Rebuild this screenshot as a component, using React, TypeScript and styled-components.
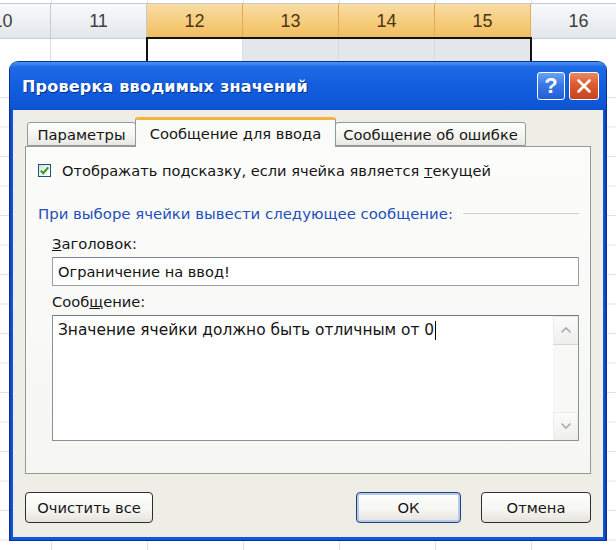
import React from "react";
import styled, { createGlobalStyle } from "styled-components";

const GlobalStyle = createGlobalStyle`
  html, body {
    margin: 0;
    padding: 0;
    background: #fff;
  }
  body {
    width: 616px;
    height: 550px;
    overflow: hidden;
    font-family: "DejaVu Sans", "Liberation Sans", sans-serif;
  }
`;

const columns = [
  { n: 10, sel: false, active: false },
  { n: 11, sel: false, active: false },
  { n: 12, sel: true, active: true },
  { n: 13, sel: true, active: false },
  { n: 14, sel: true, active: false },
  { n: 15, sel: true, active: false },
  { n: 16, sel: false, active: false },
];

export default function App() {
  return (
    <>
      <GlobalStyle />
      <Sheet>
        <HeaderRow>
          {columns.map((c) => (
            <ColHeader key={c.n} $sel={c.sel}>
              {c.n}
            </ColHeader>
          ))}
        </HeaderRow>
        <CellRow>
          {columns.map((c) => (
            <Cell key={c.n} $sel={c.sel && !c.active} />
          ))}
        </CellRow>
        <Selection />

        <Dialog>
          <TitleBar>
            <Title>Проверка вводимых значений</Title>
            <TitleButtons>
              <HelpButton>?</HelpButton>
              <CloseButton>
                <svg width="18" height="18" viewBox="0 0 18 18">
                  <path
                    d="M3.5 3.5 L14.5 14.5 M14.5 3.5 L3.5 14.5"
                    stroke="#fff"
                    strokeWidth="2.6"
                    strokeLinecap="round"
                  />
                </svg>
              </CloseButton>
            </TitleButtons>
          </TitleBar>

          <Client>
            <TabStrip>
              <Tab $w={109}>Параметры</Tab>
              <Tab $w={201} $active>
                Сообщение для ввода
              </Tab>
              <Tab $w={191}>Сообщение об ошибке</Tab>
            </TabStrip>

            <Panel>
              <CheckRow>
                <CheckBox>
                  <svg width="11" height="11" viewBox="0 0 11 11">
                    <path
                      d="M1.8 5.6 L4.3 8.2 L9.3 2.4"
                      fill="none"
                      stroke="#21a121"
                      strokeWidth="2"
                    />
                  </svg>
                </CheckBox>
                <Text>
                  Отображать подсказку, если ячейка является <U>т</U>екущей
                </Text>
              </CheckRow>

              <Section>
                <SectionTitle>При выборе ячейки вывести следующее сообщение:</SectionTitle>
                <SectionLine />
              </Section>

              <Fields>
                <Label>
                  <U>З</U>аголовок:
                </Label>
                <Input>Ограничение на ввод!</Input>
                <Label $gap>
                  Сооб<U>щ</U>ение:
                </Label>
                <TextArea>
                  <TextBody>
                    Значение ячейки должно быть отличным от 0<Caret />
                  </TextBody>
                  <ScrollBar>
                    <ScrollBtn>
                      <svg width="12" height="8" viewBox="0 0 12 8">
                        <path d="M1.5 6.5 L6 2 L10.5 6.5" fill="none" stroke="#a9abb0" strokeWidth="1.6" />
                      </svg>
                    </ScrollBtn>
                    <ScrollTrack />
                    <ScrollBtn>
                      <svg width="12" height="8" viewBox="0 0 12 8">
                        <path d="M1.5 1.5 L6 6 L10.5 1.5" fill="none" stroke="#a9abb0" strokeWidth="1.6" />
                      </svg>
                    </ScrollBtn>
                  </ScrollBar>
                </TextArea>
              </Fields>
            </Panel>

            <ButtonRow>
              <Button $w={128}>Очистить все</Button>
              <Spacer />
              <Button $w={105} $default>
                ОК
              </Button>
              <Button $w={110}>Отмена</Button>
            </ButtonRow>
          </Client>
        </Dialog>
      </Sheet>
    </>
  );
}

const Sheet = styled.div`
  position: relative;
  width: 616px;
  height: 550px;
  overflow: hidden;
  background-color: #fff;
  background-image: linear-gradient(to right, #e0e2e5 0 1px, transparent 1px),
    linear-gradient(to bottom, #e0e2e5 0 1px, transparent 1px);
  background-size: 96px 100%, 100% 29.5px;
  background-position: 51px 0, 0 38px;
`;

const HeaderRow = styled.div`
  display: flex;
  margin: 3px 0 0 -45px;
  height: 34px;
  border-top: 1px solid #c6cbd3;
  border-bottom: 1px solid #c6cbd3;
`;

const ColHeader = styled.div<{ $sel: boolean }>`
  flex: 0 0 96px;
  box-sizing: border-box;
  display: flex;
  align-items: center;
  justify-content: center;
  border-right: 1px solid ${(p) => (p.$sel ? "#e2ac55" : "#c6cbd3")};
  background: ${(p) =>
    p.$sel
      ? "linear-gradient(to bottom, #f9dca5 0%, #f6cd80 50%, #f0bd5e 100%)"
      : "linear-gradient(to bottom, #f8f9fb 0%, #eef0f3 50%, #e2e5ea 100%)"};
  color: ${(p) => (p.$sel ? "#4a3512" : "#3c3f44")};
  font-family: "Liberation Sans", Arial, sans-serif;
  font-size: 18px;
`;

const CellRow = styled.div`
  display: flex;
  margin-left: -45px;
  height: 30px;
`;

const Cell = styled.div<{ $sel: boolean }>`
  flex: 0 0 96px;
  box-sizing: border-box;
  border-right: 1px solid #dadcdf;
  background: ${(p) => (p.$sel ? "#e3e6eb" : "#fff")};
`;

const Selection = styled.div`
  position: absolute;
  left: 146px;
  top: 37px;
  width: 386px;
  height: 40px;
  box-sizing: border-box;
  border: 2px solid #111;
  border-bottom: none;
`;

const Dialog = styled.div`
  position: absolute;
  left: 10px;
  top: 62px;
  width: 596px;
  height: 478px;
  display: flex;
  flex-direction: column;
  border-radius: 8px 8px 0 0;
  background: linear-gradient(to right, #0a3fb8 0, #1258dc 2px, #1258dc calc(100% - 2px), #0a34a8 100%);
  box-shadow: 0 0 0 1px #0b2f96;
  overflow: hidden;
`;

const TitleBar = styled.div`
  height: 48px;
  flex: 0 0 48px;
  display: flex;
  align-items: center;
  padding: 0 7px 0 12px;
  background: linear-gradient(
    to bottom,
    #4b95f5 0%,
    #1f6be6 10%,
    #135fdf 45%,
    #0e58d8 85%,
    #0c50cb 100%
  );
`;

const Title = styled.div`
  flex: 1;
  color: #fff;
  font-size: 16px;
  font-weight: bold;
  letter-spacing: 0.2px;
  text-shadow: 1px 1px 0 #0a2f86;
`;

const TitleButtons = styled.div`
  display: flex;
  gap: 4px;
`;

const TitleBtn = styled.div`
  width: 28px;
  height: 28px;
  box-sizing: border-box;
  border: 1px solid #fff;
  border-radius: 3px;
  display: flex;
  align-items: center;
  justify-content: center;
`;

const HelpButton = styled(TitleBtn)`
  background: linear-gradient(to bottom, #6aa2f6 0%, #3a78e8 45%, #215fd6 100%);
  color: #fff;
  font-family: "Liberation Sans", Arial, sans-serif;
  font-weight: bold;
  font-size: 22px;
`;

const CloseButton = styled(TitleBtn)`
  width: 30px;
  background: linear-gradient(to bottom, #ec8a62 0%, #dc5a30 45%, #c8441c 100%);
`;

const Client = styled.div`
  flex: 1;
  margin: 0 3px 3px 3px;
  padding: 7px 12px 14px 12px;
  background: #eeede6;
  display: flex;
  flex-direction: column;
  color: #151515;
  font-size: 14.7px;
`;

const TabStrip = styled.div`
  display: flex;
  align-items: flex-end;
  height: 29px;
  padding-left: 2px;
  position: relative;
  z-index: 1;
  font-size: 14.7px;
`;

const Tab = styled.div<{ $w: number; $active?: boolean }>`
  width: ${(p) => p.$w}px;
  box-sizing: border-box;
  height: ${(p) => (p.$active ? "30px" : "24px")};
  margin-bottom: ${(p) => (p.$active ? "-1px" : "0")};
  margin-left: ${(p) => (p.$active ? "-1px" : "0")};
  margin-right: ${(p) => (p.$active ? "-1px" : "0")};
  display: flex;
  align-items: center;
  justify-content: center;
  padding-top: ${(p) => (p.$active ? "0" : "1px")};
  border: 1px solid #919b9c;
  border-bottom: ${(p) => (p.$active ? "none" : "1px solid #919b9c")};
  border-top: ${(p) => (p.$active ? "3px solid #f5b43e" : "1px solid #919b9c")};
  border-radius: 3px 3px 0 0;
  background: ${(p) =>
    p.$active ? "#fbfbf9" : "linear-gradient(to bottom, #fefefe 0%, #f4f4f0 60%, #e8e7e1 100%)"};
  position: relative;
  z-index: ${(p) => (p.$active ? 2 : 1)};
  white-space: nowrap;
`;

const Panel = styled.div`
  height: 328px;
  box-sizing: border-box;
  border: 1px solid #919b9c;
  background: linear-gradient(to bottom, #fcfcfb 0%, #f6f6f2 100%);
  padding: 16px 11px 0 12px;
  display: flex;
  flex-direction: column;
`;

const CheckRow = styled.div`
  display: flex;
  align-items: center;
  gap: 11px;
  height: 14px;
`;

const CheckBox = styled.div`
  width: 13px;
  height: 13px;
  box-sizing: border-box;
  border: 1px solid #1c5180;
  background: linear-gradient(135deg, #dcdcd6 0%, #fbfbf9 70%);
  display: flex;
  align-items: center;
  justify-content: center;
`;

const Text = styled.span`
  white-space: nowrap;
  font-size: 14.6px;
`;

const U = styled.span`
  text-decoration: underline;
`;

const Section = styled.div`
  display: flex;
  align-items: center;
  gap: 10px;
  margin-top: 28px;
  height: 17px;
`;

const SectionTitle = styled.span`
  color: #1f4fbc;
  white-space: nowrap;
  font-size: 14.9px;
`;

const SectionLine = styled.div`
  flex: 1;
  height: 1px;
  background: #d2d0c4;
`;

const Fields = styled.div`
  display: flex;
  flex-direction: column;
  margin: 13px 0 0 14px;
`;

const Label = styled.div<{ $gap?: boolean }>`
  height: 17px;
  margin: ${(p) => (p.$gap ? "7px" : "0")} 0 5px 0;
  white-space: nowrap;
`;

const Input = styled.div`
  height: 29px;
  box-sizing: border-box;
  border: 1px solid #9a9ea4;
  border-top-color: #7f848b;
  background: #fff;
  display: flex;
  align-items: center;
  padding-left: 5px;
  font-size: 14.6px;
`;

const TextArea = styled.div`
  height: 126px;
  box-sizing: border-box;
  border: 1px solid #8c9097;
  border-top-color: #767b82;
  background: #fff;
  display: flex;
`;

const TextBody = styled.div`
  flex: 1;
  padding: 5px 5px;
  display: flex;
  align-items: flex-start;
  white-space: nowrap;
  line-height: 19px;
  font-size: 15.4px;
`;

const Caret = styled.span`
  display: inline-block;
  width: 1px;
  height: 19px;
  margin-left: 1px;
  background: #000;
`;

const ScrollBar = styled.div`
  width: 25px;
  display: flex;
  flex-direction: column;
  background: #f9f9f8;
`;

const ScrollBtn = styled.div`
  height: 28px;
  box-sizing: border-box;
  border: 1px solid #ececea;
  background: linear-gradient(to bottom, #fbfbfa, #efefed);
  display: flex;
  align-items: center;
  justify-content: center;
`;

const ScrollTrack = styled.div`
  flex: 1;
  border-top: 1px solid #d6d6d3;
  background: #f8f8f7;
`;

const ButtonRow = styled.div`
  display: flex;
  gap: 20px;
  margin-top: 18px;
  height: 31px;
`;

const Spacer = styled.div`
  flex: 1;
`;

const Button = styled.div<{ $w: number; $default?: boolean }>`
  width: ${(p) => p.$w}px;
  height: 31px;
  box-sizing: border-box;
  border: 1px solid ${(p) => (p.$default ? "#23406e" : "#2e2e2e")};
  border-radius: 4px;
  background: linear-gradient(to bottom, #ffffff 0%, #f5f5f1 60%, #e4e2da 100%);
  box-shadow: ${(p) => (p.$default ? "inset 0 0 0 2px #b4cbef" : "none")};
  display: flex;
  align-items: center;
  justify-content: center;
  white-space: nowrap;
`;
